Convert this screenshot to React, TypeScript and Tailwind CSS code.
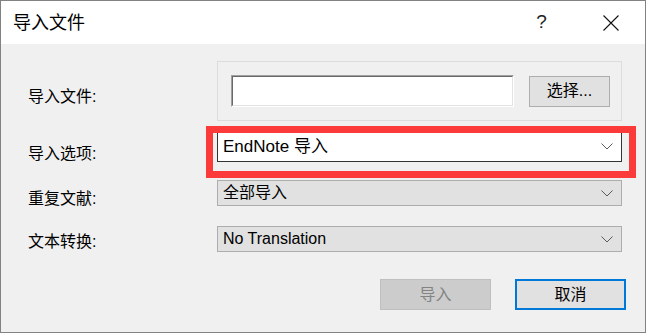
const font = { fontFamily: '"Liberation Sans", "Noto Sans CJK SC", sans-serif' };

function Chevron() {
  return (
    <svg width="12" height="7" viewBox="0 0 12 7" className="shrink-0">
      <polyline points="0.5,0.5 6,6 11.5,0.5" fill="none" stroke="#5a5a5a" strokeWidth="1" />
    </svg>
  );
}

function Combo({ text, white, h }: { text: string; white?: boolean; h: string }) {
  return (
    <div
      className={`flex items-center justify-between w-[405px] pl-[5px] pr-[8px] ${h} ${
        white ? "bg-white border border-[#333333] text-[17px]" : "bg-[#e1e1e1] border border-[#adadad] text-[16px]"
      } text-black`}
    >
      <span className="leading-none">{text}</span>
      <Chevron />
    </div>
  );
}

export default function App() {
  return (
    <div className="relative w-[646px] h-[333px] border border-[#828282] bg-[#f0f0f0] flex flex-col" style={font}>
      {/* Title bar */}
      <div className="h-[43px] bg-white flex items-center shrink-0">
        <span className="pl-[12px] text-[18px] text-black leading-none">导入文件</span>
        <div className="flex-1" />
        <div className="w-[69px] h-full flex items-center justify-center text-[19px] text-[#222]">?</div>
        <div className="w-[69px] h-full flex items-center justify-center">
          <svg width="16" height="16" viewBox="0 0 16 16">
            <path d="M0.5 0.5 L15.5 15.5 M15.5 0.5 L0.5 15.5" stroke="#111" strokeWidth="1.1" />
          </svg>
        </div>
      </div>

      {/* Form */}
      <div className="flex flex-col pt-[17px] text-[16px] text-black">
        <div className="flex items-start">
          <div className="w-[216px] pl-[27px] mt-[26px] leading-[20px]">导入文件:</div>
          <div className="w-[405px] h-[60px] border border-[#dcdcdc] flex items-center pl-[13px] pr-[10px]">
            <div className="w-[283px] h-[32px] border-t border-l border-[#a0a0a0] border-b-white border-r-white border-b border-r">
              <div className="w-full h-full bg-white border-t border-l border-[#696969] border-b border-r border-b-[#e3e3e3] border-r-[#e3e3e3]" />
            </div>
            <div className="ml-[15px] w-[81px] h-[31px] bg-[#e1e1e1] border border-[#adadad] flex items-center justify-center">
              选择...
            </div>
          </div>
        </div>

        <div className="flex items-start mt-[10px]">
          <div className="w-[216px] pl-[27px] mt-[13px] leading-[20px]">导入选项:</div>
          <Combo text="EndNote 导入" white h="h-[31px]" />
        </div>

        <div className="flex items-start mt-[16px]">
          <div className="w-[216px] pl-[27px] mt-[9px] leading-[20px]">重复文献:</div>
          <Combo text="全部导入" h="h-[26px]" />
        </div>

        <div className="flex items-start mt-[17px]">
          <div className="w-[216px] pl-[27px] mt-[6px] leading-[20px]">文本转换:</div>
          <Combo text="No Translation" h="h-[26px]" />
        </div>

        <div className="flex justify-end gap-[24px] pr-[19px] mt-[27px]">
          <div className="w-[111px] h-[31px] bg-[#cccccc] border border-[#bfbfbf] text-[#838383] flex items-center justify-center">
            导入
          </div>
          <div className="w-[111px] h-[31px] bg-[#e1e1e1] border-2 border-[#0078d7] flex items-center justify-center">
            取消
          </div>
        </div>
      </div>

      {/* Red highlight annotation */}
      <div className="absolute left-[205px] top-[125px] w-[430px] h-[52px] border-[7px] border-[#fd3a3a] pointer-events-none" />
    </div>
  );
}
